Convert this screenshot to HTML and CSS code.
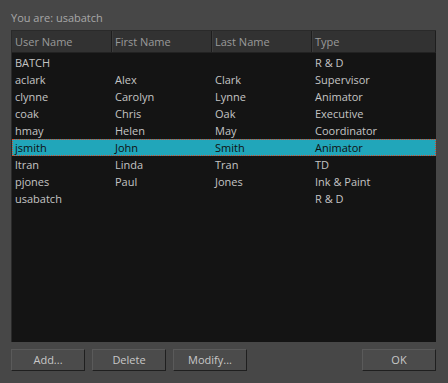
FILE: index.html
```html
<!DOCTYPE html>
<html>
<head>
<meta charset="utf-8">
<link rel="stylesheet" href="styles.css">
</head>
<body>
<div class="dialog">
  <div class="label">You are: usabatch</div>
  <div class="table">
    <div class="row head">
      <div class="c c1">User Name</div>
      <div class="c c2">First Name</div>
      <div class="c c3">Last Name</div>
      <div class="c c4">Type</div>
    </div>
    <div class="body">
      <div class="row"><div class="c c1">BATCH</div><div class="c c2"></div><div class="c c3"></div><div class="c c4">R &amp; D</div></div>
      <div class="row"><div class="c c1">aclark</div><div class="c c2">Alex</div><div class="c c3">Clark</div><div class="c c4">Supervisor</div></div>
      <div class="row"><div class="c c1">clynne</div><div class="c c2">Carolyn</div><div class="c c3">Lynne</div><div class="c c4">Animator</div></div>
      <div class="row"><div class="c c1">coak</div><div class="c c2">Chris</div><div class="c c3">Oak</div><div class="c c4">Executive</div></div>
      <div class="row"><div class="c c1">hmay</div><div class="c c2">Helen</div><div class="c c3">May</div><div class="c c4">Coordinator</div></div>
      <div class="row sel"><div class="c c1">jsmith</div><div class="c c2">John</div><div class="c c3">Smith</div><div class="c c4">Animator</div></div>
      <div class="row"><div class="c c1">ltran</div><div class="c c2">Linda</div><div class="c c3">Tran</div><div class="c c4">TD</div></div>
      <div class="row"><div class="c c1">pjones</div><div class="c c2">Paul</div><div class="c c3">Jones</div><div class="c c4">Ink &amp; Paint</div></div>
      <div class="row"><div class="c c1">usabatch</div><div class="c c2"></div><div class="c c3"></div><div class="c c4">R &amp; D</div></div>
    </div>
  </div>
  <div class="buttons">
    <button class="btn">Add...</button>
    <button class="btn">Delete</button>
    <button class="btn">Modify...</button>
    <span class="spacer"></span>
    <button class="btn">OK</button>
  </div>
</div>
</body>
</html>
```
FILE: styles.css
```css
html, body {
  margin: 0;
  padding: 0;
  background: #474747;
}
.dialog {
  width: 448px;
  height: 383px;
  box-sizing: border-box;
  padding: 10px 12px 0 11px;
  font-family: "Open Sans", "Noto Sans", sans-serif;
  font-size: 11px;
  color: #c4c4c4;
  display: flex;
  flex-direction: column;
}
.label {
  height: 20px;
  line-height: 16px;
  color: #a8a8a8;
}
.table {
  height: 312px;
  box-sizing: border-box;
  background: #141414;
  border-top: 1px solid #2a2a2a;
  border-left: 1px solid #2a2a2a;
  display: flex;
  flex-direction: column;
}
.row {
  display: flex;
  height: 17px;
  line-height: 17px;
}
.row.head {
  height: 22px;
  line-height: 21px;
  background: #323232;
  color: #9a9a9a;
  border-bottom: 1px solid #222;
  box-sizing: border-box;
}
.head .c {
  border-right: 1px solid #1e1e1e;
  box-shadow: inset 1px 0 0 #3c3c3c;
}
.head .c1 { box-shadow: none; }
.body {
  padding-top: 1px;
}
.c {
  box-sizing: border-box;
  padding-left: 3px;
  white-space: nowrap;
  overflow: hidden;
}
.c1 { width: 100px; }
.c2 { width: 100px; }
.c3 { width: 100px; }
.c4 { flex: 1; }
.row.sel {
  background: #21a6ba;
  color: #101010;
  outline: 1px dotted #d84a2a;
  outline-offset: -1px;
}
.buttons {
  display: flex;
  gap: 7px;
  margin-top: 7px;
}
.spacer { flex: 1; }
.btn {
  width: 74px;
  height: 22px;
  box-sizing: border-box;
  background: #4b4b4b;
  border: 1px solid #5a5a5a;
  border-right-color: #1f1f1f;
  border-bottom-color: #1f1f1f;
  color: #c8c8c8;
  font-family: "Open Sans", "Noto Sans", sans-serif;
  font-size: 11px;
  padding: 0;
  line-height: 18px;
}
```
